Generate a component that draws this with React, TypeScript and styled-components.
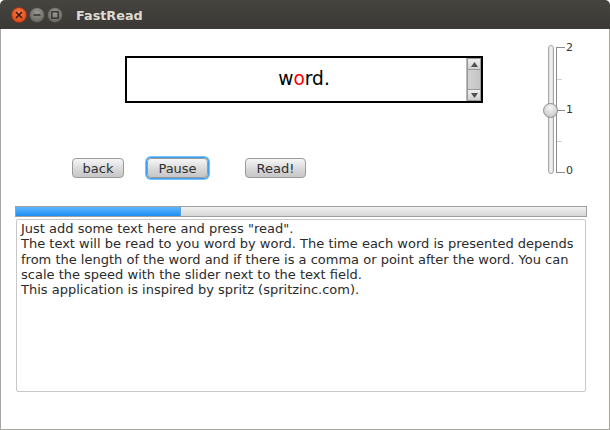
import React from 'react'
import { styled, createGlobalStyle } from 'styled-components'

const GlobalStyle = createGlobalStyle`
  html, body {
    margin: 0;
    padding: 0;
    background: #ffffff;
  }
  body {
    font-family: "DejaVu Sans", "Liberation Sans", sans-serif;
  }
`

const lines = [
  'Just add some text here and press "read".',
  'The text will be read to you word by word. The time each word is presented depends',
  'from the length of the word and if there is a comma or point after the word. You can',
  'scale the speed with the slider next to the text field.',
  'This application is inspired by spritz (spritzinc.com).',
]

function App() {
  return (
    <>
      <GlobalStyle />
      <Window>
        <TitleBar>
          <Controls>
            <WinButton kind="close">
              <svg width="8" height="8" viewBox="0 0 8 8">
                <path d="M1 1 L7 7 M7 1 L1 7" stroke="#3a1a0e" strokeWidth="1.6" />
              </svg>
            </WinButton>
            <WinButton kind="min">
              <svg width="8" height="8" viewBox="0 0 8 8">
                <path d="M0.5 4 H7.5" stroke="#2e2d2a" strokeWidth="1.4" />
              </svg>
            </WinButton>
            <WinButton kind="max">
              <svg width="8" height="8" viewBox="0 0 8 8">
                <rect x="0.8" y="0.8" width="6.4" height="6.4" fill="none" stroke="#2e2d2a" strokeWidth="1.3" />
              </svg>
            </WinButton>
          </Controls>
          <Title>FastRead</Title>
        </TitleBar>
        <Content>
          <TopRow>
            <LeftColumn>
              <WordBox>
                <Word>
                  w<Focus>o</Focus>rd.
                </Word>
                <ScrollBar>
                  <ScrollArrow>
                    <svg width="7" height="5" viewBox="0 0 7 5">
                      <path d="M0 5 L3.5 0 L7 5 Z" fill="#505050" />
                    </svg>
                  </ScrollArrow>
                  <ScrollThumb />
                  <ScrollArrow>
                    <svg width="7" height="5" viewBox="0 0 7 5">
                      <path d="M0 0 L3.5 5 L7 0 Z" fill="#505050" />
                    </svg>
                  </ScrollArrow>
                </ScrollBar>
              </WordBox>
              <ButtonRow>
                <Button width={52}>back</Button>
                <Button width={61} focused>Pause</Button>
                <Button width={61}>Read!</Button>
              </ButtonRow>
            </LeftColumn>
            <Slider>
              <Track>
                <Thumb />
              </Track>
              <svg width="11" height="138" viewBox="0 0 11 138">
                <path d="M1.5 7 V132" stroke="#8c8c8c" strokeWidth="1" />
                <path d="M1 7.5 H10 M1 70.5 H10 M1 132.5 H10" stroke="#8c8c8c" strokeWidth="1" />
                <path d="M2 39.5 H7 M2 101.5 H7" stroke="#d0d0d0" strokeWidth="1" />
              </svg>
              <Labels>
                <span>2</span>
                <span>1</span>
                <span>0</span>
              </Labels>
            </Slider>
          </TopRow>
          <Progress>
            <ProgressFill style={{ width: `${(165 / 572) * 100}%` }} />
          </Progress>
          <TextArea>
            {lines.map((l) => (
              <Line key={l}>{l}</Line>
            ))}
          </TextArea>
        </Content>
      </Window>
    </>
  )
}

const Window = styled.div`
  width: 610px;
  height: 430px;
  display: flex;
  flex-direction: column;
  box-sizing: border-box;
  overflow: hidden;
`

const TitleBar = styled.div`
  height: 29px;
  flex-shrink: 0;
  background: linear-gradient(#45443f, #3a3935);
  border-radius: 5px 5px 0 0;
  display: flex;
  align-items: center;
  padding-left: 11px;
  box-sizing: border-box;
`

const Controls = styled.div`
  display: flex;
  gap: 2px;
  margin-top: 1px;
`

const WinButton = styled.div<{ kind: 'close' | 'min' | 'max' }>`
  width: 16px;
  height: 16px;
  border-radius: 50%;
  display: flex;
  align-items: center;
  justify-content: center;
  box-sizing: border-box;
  border: 1px solid ${({ kind }) => (kind === 'close' ? '#9c3512' : '#4a4945')};
  background: ${({ kind }) =>
    kind === 'close'
      ? 'radial-gradient(circle at 50% 35%, #f57b4b, #e2501c 70%)'
      : 'radial-gradient(circle at 50% 35%, #9b9991, #6f6d67 70%)'};
`

const Title = styled.div`
  margin-left: 13px;
  margin-top: 1px;
  color: #dfdbd2;
  font-weight: bold;
  font-size: 12.8px;
  font-family: "DejaVu Sans", sans-serif;
`

const Content = styled.div`
  flex: 1;
  display: flex;
  flex-direction: column;
  background: #ffffff;
  border: 1px solid #a8a6a0;
  border-top: none;
  padding: 0 22px 0 14px;
`

const TopRow = styled.div`
  display: flex;
`

const LeftColumn = styled.div`
  width: 525px;
  display: flex;
  flex-direction: column;
  padding-top: 27px;
`

const WordBox = styled.div`
  margin-left: 110px;
  width: 358px;
  height: 47px;
  box-sizing: border-box;
  border: 2px solid #000000;
  display: flex;
  background: #ffffff;
`

const Word = styled.div`
  flex: 1;
  display: flex;
  align-items: center;
  justify-content: center;
  padding-left: 15px;
  font-size: 18.6px;
  color: #000000;
  padding-bottom: 3px;
`

const Focus = styled.span`
  color: #ff0000;
`

const ScrollBar = styled.div`
  width: 15px;
  display: flex;
  flex-direction: column;
  border-left: 1px solid #b8b8b8;
  box-sizing: border-box;
  background: #d8d8d8;
`

const ScrollArrow = styled.div`
  height: 12px;
  display: flex;
  align-items: center;
  justify-content: center;
  background: linear-gradient(#efefef, #cfcfcf);
  border: 1px solid #9a9a9a;
  box-sizing: border-box;
`

const ScrollThumb = styled.div`
  flex: 1;
  background: linear-gradient(90deg, #d2d2d2, #c4c4c4);
  border-left: 1px solid #9a9a9a;
  border-right: 1px solid #9a9a9a;
`

const ButtonRow = styled.div`
  display: flex;
  margin-top: 55px;
  padding-left: 57px;
  gap: 23px;
  align-items: center;
  & > :last-child {
    margin-left: 14px;
  }
`

const Button = styled.div<{ width: number; focused?: boolean }>`
  width: ${({ width }) => width}px;
  height: 20px;
  box-sizing: border-box;
  border: 1px solid #9a9a9a;
  border-radius: 4px;
  background: linear-gradient(#f6f6f6, #d6d6d6 60%, #c6c6c6);
  color: #2f2f2f;
  font-size: 13px;
  display: flex;
  align-items: center;
  justify-content: center;
  box-shadow: ${({ focused }) => (focused ? '0 0 0 1px #3c9ef0, 0 0 0 2px #7cc0f7' : 'none')};
`

const Slider = styled.div`
  margin-left: 8px;
  padding-top: 11px;
  display: flex;
  height: 138px;
`

const Track = styled.div`
  position: relative;
  margin-top: 5px;
  width: 6px;
  height: 129px;
  box-sizing: border-box;
  border: 1px solid #a8a8a8;
  border-radius: 3px;
  background: linear-gradient(90deg, #dcdcdc, #f4f4f4 50%, #dcdcdc);
  margin-right: 1px;
`

const Thumb = styled.div`
  position: absolute;
  left: -6px;
  top: 57px;
  width: 15px;
  height: 15px;
  box-sizing: border-box;
  border-radius: 50%;
  border: 1px solid #8e8e8e;
  background: radial-gradient(circle at 50% 30%, #f6f6f6, #c9c9c9 80%);
`

const Labels = styled.div`
  display: flex;
  flex-direction: column;
  justify-content: space-between;
  height: 138px;
  padding-top: 1px;
  box-sizing: border-box;
  font-size: 11px;
  line-height: 14px;
  color: #333333;
  margin-left: 0;
`

const Progress = styled.div`
  margin-top: 28px;
  width: 572px;
  height: 11px;
  box-sizing: border-box;
  border: 1px solid #a0a0a0;
  background: linear-gradient(#f2f2f2, #d6d6d6);
  display: flex;
`

const ProgressFill = styled.div`
  height: 100%;
  background: linear-gradient(#5cb6ff, #1e8ef0);
  border-right: 1px solid #5aa0dc;
`

const TextArea = styled.div`
  margin: 2px 0 0 1px;
  width: 570px;
  height: 173px;
  box-sizing: border-box;
  border: 1px solid #c8c8c8;
  border-radius: 2px;
  padding: 1px 4px;
  font-size: 13px;
  line-height: 15.3px;
  color: #2b2b2b;
`

const Line = styled.div`
  white-space: nowrap;
`

export default App
